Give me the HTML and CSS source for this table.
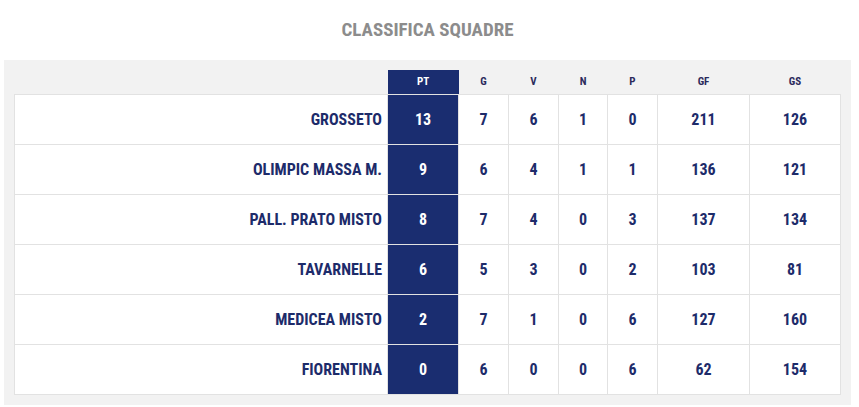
FILE: index.html
```html
<!DOCTYPE html>
<html lang="it">
<head>
  <meta charset="UTF-8" />
  <meta name="viewport" content="width=device-width, initial-scale=1" />
  <title>Classifica Squadre</title>
  <link rel="stylesheet" href="styles.css">
</head>
<body>

  <h2 class="title">CLASSIFICA SQUADRE</h2>

  <div class="standings">
    <table>
      <thead>
        <tr>
          <th class="team"></th>
          <th class="pt">PT</th>
          <th>G</th>
          <th>V</th>
          <th class="narrow">N</th>
          <th>P</th>
          <th class="wide">GF</th>
          <th class="wide last">GS</th>
        </tr>
      </thead>
      <tbody>
        <tr>
          <td class="team">GROSSETO</td>
          <td class="pt">13</td><td>7</td><td>6</td><td>1</td><td>0</td><td>211</td><td>126</td>
        </tr>
        <tr>
          <td class="team">OLIMPIC MASSA M.</td>
          <td class="pt">9</td><td>6</td><td>4</td><td>1</td><td>1</td><td>136</td><td>121</td>
        </tr>
        <tr>
          <td class="team">PALL. PRATO MISTO</td>
          <td class="pt">8</td><td>7</td><td>4</td><td>0</td><td>3</td><td>137</td><td>134</td>
        </tr>
        <tr>
          <td class="team">TAVARNELLE</td>
          <td class="pt">6</td><td>5</td><td>3</td><td>0</td><td>2</td><td>103</td><td>81</td>
        </tr>
        <tr>
          <td class="team">MEDICEA MISTO</td>
          <td class="pt">2</td><td>7</td><td>1</td><td>0</td><td>6</td><td>127</td><td>160</td>
        </tr>
        <tr>
          <td class="team">FIORENTINA</td>
          <td class="pt">0</td><td>6</td><td>0</td><td>0</td><td>6</td><td>62</td><td>154</td>
        </tr>
      </tbody>
    </table>
  </div>

</body>
</html>
```

FILE: styles.css
```css
* {
  box-sizing: border-box;
}
body {
  margin: 0;
  padding: 0;
  font-family: 'Roboto Condensed', 'DejaVu Sans Condensed', Roboto, sans-serif;
  background: #ffffff;
  color: #1d2b6a;
}

.title {
  margin: 0 4px 0 0;
  padding: 18px 0 0;
  height: 60px;
  text-align: center;
  font-size: 19px;
  font-weight: 700;
  color: #8c8c8c;
}

.standings {
  background: #f2f2f2;
  margin: 0 8px 0 4px;
  padding: 10px 10px 10px 10px;
}

table {
  width: 100%;
  border-collapse: collapse;
  table-layout: fixed;
}

th {
  height: 24px;
  padding: 0;
  font-size: 11px;
  font-weight: 700;
  color: #2b2a5c;
  text-align: center;
  width: 50px;
}

th.team {
  width: auto;
}

th.pt {
  width: 71px;
  background: #1a2d70;
  color: #ffffff;
}

th.narrow {
  width: 49px;
}

th.wide {
  width: 92px;
}

th.last {
  width: 91px;
}

td {
  height: 50px;
  padding: 0;
  background: #ffffff;
  border: 1px solid #e2e2e2;
  text-align: center;
  font-size: 16px;
  font-weight: 700;
  color: #1d2b6a;
}

td.team {
  text-align: right;
  padding-right: 5px;
}

td.pt {
  background: #1a2d70;
  color: #ffffff;
}
```
